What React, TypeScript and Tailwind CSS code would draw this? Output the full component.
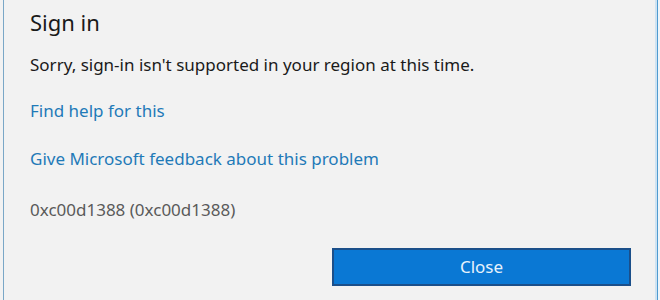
export default function App() {
  return (
    <div className="h-[300px] w-[660px] overflow-hidden bg-[#f2f2f2] font-['Noto_Sans',sans-serif]">
      <div className="flex h-full">
        <div className="ml-[3px] w-px bg-[#7aa7c7]" />
        <div className="flex flex-1 flex-col pl-[26px] pr-[24px]">
          <h1 className="mt-[8px] text-[22px] leading-[28px] text-[#1a1a1a]">Sign in</h1>
          <p className="mt-[18px] text-[17px] leading-[22px] text-[#1a1a1a]">
            Sorry, sign-in isn't supported in your region at this time.
          </p>
          <a href="#" className="mt-[24px] text-[17px] leading-[22px] text-[#1f7ab8]">
            Find help for this
          </a>
          <a href="#" className="mt-[26px] text-[17px] leading-[22px] text-[#1f7ab8]">
            Give Microsoft feedback about this problem
          </a>
          <p className="mt-[29px] text-[17px] leading-[22px] text-[#5a5a5a]">0xc00d1388 (0xc00d1388)</p>
          <div className="mt-auto mb-[14px] flex justify-end">
            <button className="h-[38px] w-[299px] border-2 border-[#1b4f8a] bg-[#0a78d4] text-[17px] text-[#e6f2fc]">
              Close
            </button>
          </div>
        </div>
        <div className="w-[2px] bg-[#cfe3f2]" />
        <div className="w-px bg-[#4f9bd0]" />
        <div className="w-[2px] bg-[#eef5fa]" />
      </div>
    </div>
  )
}
